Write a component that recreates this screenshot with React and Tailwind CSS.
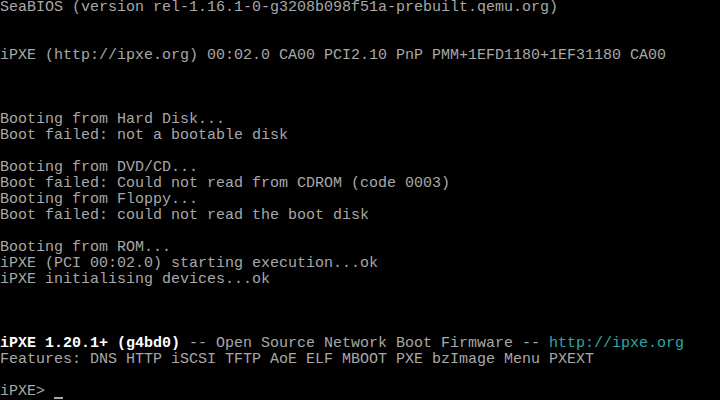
const lines = [
  'SeaBIOS (version rel-1.16.1-0-g3208b098f51a-prebuilt.qemu.org)',
  '',
  '',
  'iPXE (http://ipxe.org) 00:02.0 CA00 PCI2.10 PnP PMM+1EFD1180+1EF31180 CA00',
  '',
  '',
  '',
  'Booting from Hard Disk...',
  'Boot failed: not a bootable disk',
  '',
  'Booting from DVD/CD...',
  'Boot failed: Could not read from CDROM (code 0003)',
  'Booting from Floppy...',
  'Boot failed: could not read the boot disk',
  '',
  'Booting from ROM...',
  'iPXE (PCI 00:02.0) starting execution...ok',
  'iPXE initialising devices...ok',
  '',
  '',
  '',
];

const App = () => {
  return (
    <div className="w-[720px] h-[400px] bg-black overflow-hidden text-[#a8a8a8] text-[15px] leading-[16px] whitespace-pre font-['Liberation_Mono',monospace]">
      {lines.map((l, i) => (
        <div key={i} className="h-4">{l}</div>
      ))}
      <div className="h-4">
        <span className="text-white font-bold">iPXE 1.20.1+ (g4bd0)</span>
        {' -- Open Source Network Boot Firmware -- '}
        <span className="text-[#2fa6a6]">http://ipxe.org</span>
      </div>
      <div className="h-4">Features: DNS HTTP iSCSI TFTP AoE ELF MBOOT PXE bzImage Menu PXEXT</div>
      <div className="h-4"></div>
      <div className="h-4 flex">
        <span>iPXE&gt; </span>
        <span className="inline-block w-[9px] h-[2px] bg-[#a8a8a8] mt-[13px]"></span>
      </div>
    </div>
  );
};

export default App;
